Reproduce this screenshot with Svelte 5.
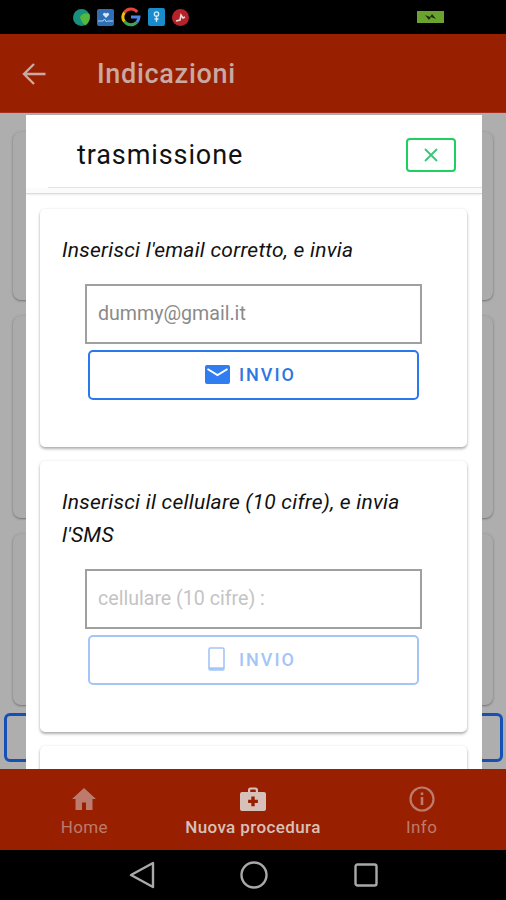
<script>
  const bgCards = [
    { id: 1, height: 168 },
    { id: 2, height: 202 },
    { id: 3, height: 171 },
  ];
  const navItems = [
    { id: "home", label: "Home", active: false },
    { id: "new", label: "Nuova procedura", active: true },
    { id: "info", label: "Info", active: false },
  ];
</script>

<div class="screen">
  <div class="status">
    <div class="status-icons">
      <svg width="17" height="17" viewBox="0 0 17 17" aria-hidden="true">
        <circle cx="8.500" cy="8.500" r="8.500" fill="#17907f" />
        <path d="M7 8c2-4 6-4.500 9.500-3 1 4-.5 8.500-4 11.500C9.500 15 8 11 7 8z" fill="#53b83c" />
      </svg>
      <svg width="17" height="17" viewBox="0 0 17 17" aria-hidden="true">
        <rect width="17" height="17" rx="2" fill="#2f6fb5" />
        <path d="M9 9L5.800 5.800a1.700 1.700 0 0 1 3.200-1 1.700 1.700 0 0 1 3.200 1z" fill="#d8e6f4" />
        <path d="M1 12h5l1.500-2 2 3 1-1h5.500" fill="none" stroke="#b8d2ec" stroke-width="1" />
      </svg>
      <svg width="20" height="20" viewBox="0 0 20 20" fill="none" stroke-width="3" aria-hidden="true">
        <path d="M16.200 5A8 8 0 0 0 3.500 5.300" stroke="#e5453a" />
        <path d="M3.500 5.300a8 8 0 0 0 0 9.400" stroke="#f2b90f" />
        <path d="M3.500 14.700a8 8 0 0 0 12.300.500" stroke="#3aa655" />
        <path d="M15.800 15.200A8 8 0 0 0 18 10h-8" stroke="#4a86e8" />
      </svg>
      <svg width="17" height="18" viewBox="0 0 17 18" aria-hidden="true">
        <rect width="17" height="18" rx="2" fill="#1a8ccc" />
        <circle cx="8.500" cy="6" r="2.200" fill="none" stroke="#d5ecf8" stroke-width="1.300" />
        <path d="M8.500 8v6M6.500 11h4" stroke="#d5ecf8" stroke-width="1.300" />
      </svg>
      <svg width="17" height="17" viewBox="0 0 17 17" aria-hidden="true">
        <circle cx="8.500" cy="8.500" r="8.500" fill="#b5222a" />
        <path d="M4 12l4-1 1-5 2 3 2-1" fill="none" stroke="#f0d7d8" stroke-width="1.600" />
      </svg>
    </div>
    <svg class="battery" width="27" height="12" viewBox="0 0 27 12" aria-hidden="true">
      <rect width="27" height="12" fill="#6aa42e" />
      <path d="M8 4l5 2 2-3 4 5-5-2-2 3z" fill="#1c2a10" />
    </svg>
  </div>

  <header class="appbar">
    <svg class="back" width="24" height="24" viewBox="0 0 24 24" fill="none" stroke="currentColor" stroke-width="2.400" aria-hidden="true">
      <path d="M23.500 12H2.500M12 2L2 12l10 10" />
    </svg>
    <h1>Indicazioni</h1>
  </header>

  <main class="content">
    <div class="behind">
      {#each bgCards as card (card.id)}
        <div class="bg-card" style="height:{card.height}px"></div>
      {/each}
      <div class="bg-button"></div>
    </div>

    <section class="modal">
      <div class="modal-head">
        <h2>trasmissione</h2>
        <button class="close" type="button" aria-label="Chiudi">
          <svg width="16" height="16" viewBox="0 0 16 16" fill="none" stroke="currentColor" stroke-width="1.800" aria-hidden="true">
            <path d="M2 2l12 12M14 2L2 14" />
          </svg>
        </button>
      </div>
      <div class="modal-rule"></div>

      <div class="modal-body">
        <div class="card">
          <p>Inserisci l'email corretto, e invia</p>
          <input class="field" type="text" value="dummy@gmail.it" />
          <button class="send" type="button">
            <svg width="25" height="19" viewBox="0 0 25 19" aria-hidden="true">
              <rect width="25" height="19" rx="2" fill="#2f7df0" />
              <path d="M2.500 4L12.500 10 22.500 4" fill="none" stroke="#fff" stroke-width="2" />
            </svg>
            <span>INVIO</span>
          </button>
        </div>

        <div class="card">
          <p>Inserisci il cellulare (10 cifre), e invia l'SMS</p>
          <input class="field" type="text" placeholder="cellulare (10 cifre) :" />
          <button class="send disabled" type="button">
            <svg width="17" height="24" viewBox="0 0 17 24" fill="none" stroke="currentColor" aria-hidden="true">
              <rect x="1" y="1" width="15" height="22" rx="1.500" stroke-width="1.600" />
              <path d="M1 21.500h15" stroke-width="2.400" />
            </svg>
            <span>INVIO</span>
          </button>
        </div>

        <div class="card"></div>
      </div>
    </section>
  </main>

  <nav class="bottom">
    {#each navItems as item (item.id)}
      <div class="tab" class:active={item.active}>
        {#if item.id === "home"}
          <svg width="26" height="24" viewBox="0 0 26 24" fill="currentColor" aria-hidden="true">
            <path d="M13 1L1 12h3.500v11H11v-7.500h4V23h6.500V12H25z" />
          </svg>
        {:else if item.id === "new"}
          <svg width="26" height="24" viewBox="0 0 26 24" aria-hidden="true">
            <path fill="currentColor" fill-rule="evenodd" d="M8 5V3a2.500 2.500 0 0 1 2.500-2.500h5A2.500 2.500 0 0 1 18 3v2h6a2 2 0 0 1 2 2v15a2 2 0 0 1-2 2H2a2 2 0 0 1-2-2V7a2 2 0 0 1 2-2zm2.200 0h5.600V3.200a.7.700 0 0 0-.7-.7h-4.200a.7.700 0 0 0-.7.700z" />
            <path d="M11.300 9.500h3.400v3.200h3.200v3.400h-3.200v3.200h-3.400v-3.200H8.100v-3.400h3.200z" fill="#982000" />
          </svg>
        {:else}
          <svg width="26" height="26" viewBox="0 0 26 26" fill="none" stroke="currentColor" aria-hidden="true">
            <circle cx="13" cy="13" r="11.500" stroke-width="2.200" />
            <path d="M13 11v8" stroke-width="2.600" />
            <path d="M13 6.500v2.600" stroke-width="2.600" />
          </svg>
        {/if}
        <span>{item.label}</span>
      </div>
    {/each}
  </nav>

  <div class="sysnav">
    <svg width="26" height="28" viewBox="0 0 26 28" fill="none" stroke="#a9a9a9" stroke-width="2.400" aria-hidden="true">
      <path d="M24 2v24L2 14z" stroke-linejoin="round" />
    </svg>
    <svg width="28" height="28" viewBox="0 0 28 28" fill="none" stroke="#a9a9a9" stroke-width="2.400" aria-hidden="true">
      <circle cx="14" cy="14" r="12.500" />
    </svg>
    <svg width="24" height="24" viewBox="0 0 24 24" fill="none" stroke="#a9a9a9" stroke-width="2.400" aria-hidden="true">
      <rect x="1.500" y="1.500" width="21" height="21" rx="2" />
    </svg>
  </div>
</div>

<style>
  :global(body) {
    margin: 0;
    background: #000;
  }

  .screen {
    display: flex;
    flex-direction: column;
    width: 506px;
    height: 900px;
    overflow: hidden;
    font-family: Roboto, "Liberation Sans", sans-serif;
  }

  .status {
    flex: 0 0 34px;
    display: flex;
    align-items: center;
    justify-content: space-between;
    padding: 0 62px 0 73px;
    background: #000;
  }

  .status-icons {
    display: flex;
    align-items: center;
    gap: 7px;
  }

  .battery {
    flex: none;
  }

  .appbar {
    flex: 0 0 79px;
    box-sizing: border-box;
    display: flex;
    align-items: center;
    gap: 51px;
    padding: 1px 0 0 22px;
    background: #982000;
    border-bottom: 1px solid #a8301f;
    color: #c9a9a1;
  }

  .appbar h1 {
    margin: 0;
    font-size: 27px;
    font-weight: 500;
    letter-spacing: 0.7px;
  }

  .back {
    flex: none;
  }

  .content {
    flex: 1;
    position: relative;
    min-height: 0;
    overflow: hidden;
    background: #aeaeae;
  }

  .behind {
    display: flex;
    flex-direction: column;
    gap: 16px;
    padding: 19px 13px 0;
  }

  .bg-card {
    border-radius: 8px;
    background: #ababab;
    box-shadow: 0 1px 2px #777, 0 0 3px #9a9a9a;
  }

  .bg-button {
    box-sizing: border-box;
    height: 49px;
    margin: -8px -10px 0 -9px;
    border: 3px solid #1650b4;
    border-radius: 6px;
  }

  .modal {
    position: absolute;
    top: 2px;
    bottom: 0;
    left: 26px;
    width: 456px;
    overflow: hidden;
    background: #fff;
  }

  .modal-head {
    box-sizing: border-box;
    display: flex;
    align-items: center;
    justify-content: space-between;
    height: 73px;
    margin-left: 22px;
    padding: 7px 26px 0 29px;
    border-bottom: 1px solid #e4e4e4;
  }

  .modal-head h2 {
    margin: 0;
    font-size: 27px;
    font-weight: 400;
    letter-spacing: 0.9px;
    color: #111;
  }

  .close {
    display: flex;
    align-items: center;
    justify-content: center;
    width: 50px;
    height: 34px;
    padding: 0;
    border: 2px solid #1fd060;
    border-radius: 4px;
    background: #fff;
    color: #35c874;
  }

  .modal-rule {
    height: 5px;
    background: #fbfbfb;
    border-bottom: 1px solid #dcdcdc;
    box-shadow: 0 1px 2px rgba(0, 0, 0, 0.08);
  }

  .modal-body {
    display: flex;
    flex-direction: column;
    gap: 14px;
    padding: 15px 15px 0 14px;
  }

  .card {
    flex: none;
    box-sizing: border-box;
    padding: 25px 22px 47px;
    border-radius: 5px;
    background: #fff;
    box-shadow: 0 2px 3px rgba(0, 0, 0, 0.3), 0 0 3px rgba(0, 0, 0, 0.07);
  }

  .card:last-child {
    height: 60px;
  }

  .card p {
    margin: 0 0 17px;
    font-size: 21px;
    font-style: italic;
    line-height: 33px;
    letter-spacing: 0.25px;
    color: #111;
  }

  .field {
    display: block;
    box-sizing: border-box;
    width: 337px;
    height: 60px;
    margin: 0 0 6px 23px;
    padding: 0 11px 2px;
    border: 2px solid #a0a0a0;
    border-radius: 0;
    outline: none;
    background: #fff;
    font: 19.6px Roboto, "Liberation Sans", sans-serif;
    color: #8a8a8a;
  }

  .field::placeholder {
    color: #c4c4c4;
    opacity: 1;
  }

  .send {
    display: flex;
    align-items: center;
    justify-content: center;
    gap: 9px;
    box-sizing: border-box;
    width: 331px;
    height: 50px;
    margin-left: 26px;
    padding: 0 6px 2px 0;
    border: 2px solid #2a78ee;
    border-radius: 5px;
    background: #fff;
    font: 500 18px Roboto, "Liberation Sans", sans-serif;
    letter-spacing: 2px;
    color: #2f76e0;
  }

  .send.disabled {
    gap: 14px;
    padding-right: 3px;
    border-color: #a4c5f7;
    color: #a4c5f7;
  }

  .bottom {
    flex: 0 0 81px;
    display: grid;
    grid-template-columns: repeat(3, 1fr);
    background: #982000;
    color: #bd7b6d;
  }

  .tab {
    display: flex;
    flex-direction: column;
    align-items: center;
    justify-content: flex-start;
    gap: 5px;
    height: 81px;
    padding-top: 17px;
    box-sizing: border-box;
    font-size: 17px;
    letter-spacing: 0.4px;
  }

  .tab svg {
    display: block;
    height: 26px;
  }

  .tab.active {
    color: #d8c0ba;
    font-weight: 500;
  }

  .sysnav {
    flex: 0 0 50px;
    display: flex;
    align-items: center;
    justify-content: center;
    gap: 85.5px;
    background: #000;
  }
</style>
